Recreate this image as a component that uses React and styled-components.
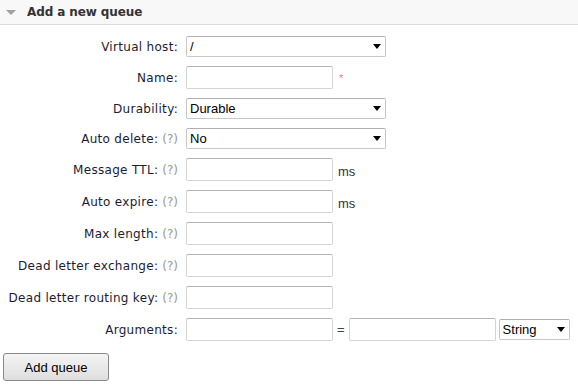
import React, { useState } from 'react';
import styled, { createGlobalStyle } from 'styled-components';

const GlobalStyle = createGlobalStyle`
  body {
    margin: 0;
    background: #fff;
    font-family: "DejaVu Sans", Verdana, sans-serif;
    color: #222;
  }
`;

const Section = styled.div`
  width: 578px;
`;

const Header = styled.div`
  height: 24px;
  display: flex;
  align-items: center;
  gap: 11px;
  padding-left: 6px;
  background: #f8f8f8;
  border-bottom: 1px solid #dcdcdc;
`;

const Arrow = styled.span`
  width: 0;
  height: 0;
  border-left: 5px solid transparent;
  border-right: 5px solid transparent;
  border-top: 5px solid #a0a0a0;
`;

const Title = styled.h2`
  margin: 0;
  font-size: 12px;
  font-weight: bold;
  color: #333;
  letter-spacing: -0.1px;
`;

const Form = styled.form`
  margin-top: 7px;
  display: grid;
  grid-template-columns: 178px 1fr;
  column-gap: 8px;
`;

const Label = styled.label`
  display: flex;
  align-items: center;
  justify-content: flex-end;
  gap: 4px;
  font-size: 12px;
  letter-spacing: 0.3px;
  color: #1c1c30;
  white-space: nowrap;
`;

const Help = styled.span`
  color: #999;
  letter-spacing: 0;
`;

const Field = styled.div`
  display: flex;
  align-items: center;
  gap: 4px;
  padding: 4px 0 5px;
  font-family: "Liberation Sans", Arial, sans-serif;
  font-size: 13px;
`;

const Input = styled.input`
  box-sizing: border-box;
  width: ${(p) => p.$w || 147}px;
  height: 23px;
  margin: 0;
  border: 1px solid #d4d4d4;
  border-top-color: #b4b4b4;
  border-radius: 2px;
  font-family: "Liberation Sans", Arial, sans-serif;
  font-size: 13px;
  padding: 2px 4px;
  outline: none;
`;

const SelectWrap = styled.div`
  position: relative;
  width: ${(p) => p.$w || 200}px;
  height: 21px;
  margin-left: ${(p) => p.$shift || 0}px;
  &::after {
    content: '';
    position: absolute;
    right: 5px;
    top: 8px;
    border-left: 4px solid transparent;
    border-right: 4px solid transparent;
    border-top: 5px solid #000;
    pointer-events: none;
  }
`;

const Select = styled.select`
  appearance: none;
  box-sizing: border-box;
  width: 100%;
  height: 100%;
  margin: 0;
  border: 1px solid #c8c8c8;
  border-top-color: #b0b0b0;
  border-radius: 2px;
  background: #fff;
  font-family: "Liberation Sans", Arial, sans-serif;
  font-size: 13px;
  color: #000;
  padding: 0 3px;
  outline: none;
`;

const Required = styled.span`
  color: #f08080;
  font-size: 11px;
  margin-left: 2px;
`;

const Unit = styled.span`
  color: #333;
  margin-left: 1px;
  padding-top: 4px;
`;

const Equals = styled.span`
  color: #444;
`;

const Button = styled.button`
  margin: 7px 0 0 3px;
  width: 106px;
  height: 28px;
  border: 1px solid #8a8a8a;
  border-radius: 3px;
  background: linear-gradient(#f4f4f4, #dedede);
  font-family: "Liberation Sans", Arial, sans-serif;
  font-size: 13px;
  color: #000;
`;

const help = <Help>(?)</Help>;

export default function App() {
  const [form, setForm] = useState({ vhost: '/', durable: 'Durable', autoDelete: 'No', type: 'String' });
  const set = (k) => (e) => setForm({ ...form, [k]: e.target.value });

  return (
    <Section>
      <GlobalStyle />
      <Header>
        <Arrow />
        <Title>Add a new queue</Title>
      </Header>
      <Form onSubmit={(e) => e.preventDefault()}>
        <Label>Virtual host:</Label>
        <Field>
          <SelectWrap>
            <Select value={form.vhost} onChange={set('vhost')}>
              <option>/</option>
            </Select>
          </SelectWrap>
        </Field>

        <Label>Name:</Label>
        <Field>
          <Input />
          <Required>*</Required>
        </Field>

        <Label>Durability:</Label>
        <Field>
          <SelectWrap>
            <Select value={form.durable} onChange={set('durable')}>
              <option>Durable</option>
              <option>Transient</option>
            </Select>
          </SelectWrap>
        </Field>

        <Label>Auto delete:{help}</Label>
        <Field>
          <SelectWrap>
            <Select value={form.autoDelete} onChange={set('autoDelete')}>
              <option>No</option>
              <option>Yes</option>
            </Select>
          </SelectWrap>
        </Field>

        <Label>Message TTL:{help}</Label>
        <Field>
          <Input />
          <Unit>ms</Unit>
        </Field>

        <Label>Auto expire:{help}</Label>
        <Field>
          <Input />
          <Unit>ms</Unit>
        </Field>

        <Label>Max length:{help}</Label>
        <Field>
          <Input />
        </Field>

        <Label>Dead letter exchange:{help}</Label>
        <Field>
          <Input />
        </Field>

        <Label>Dead letter routing key:{help}</Label>
        <Field>
          <Input />
        </Field>

        <Label>Arguments:</Label>
        <Field>
          <Input />
          <Equals>=</Equals>
          <Input />
          <SelectWrap $w={71} $shift={-1}>
            <Select value={form.type} onChange={set('type')}>
              <option>String</option>
              <option>Number</option>
              <option>List</option>
            </Select>
          </SelectWrap>
        </Field>
      </Form>
      <Button type="button">Add queue</Button>
    </Section>
  );
}
